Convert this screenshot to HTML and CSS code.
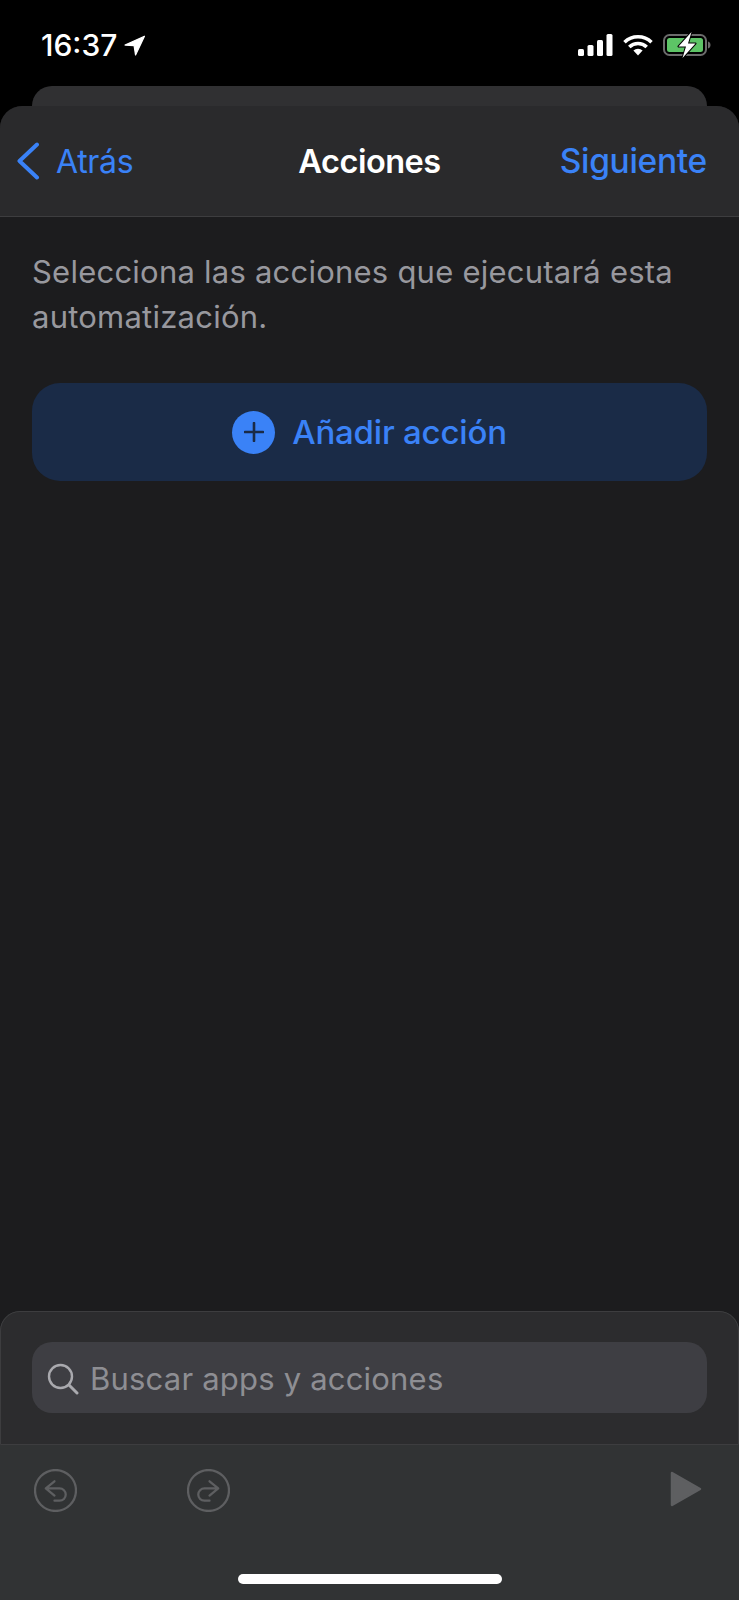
FILE: index.html
```html
<!doctype html>
<html lang="es">
  <head>
    <meta charset="UTF-8" />
    <meta name="viewport" content="width=device-width, initial-scale=1.0" />
    <title>Acciones</title>
    <link rel="stylesheet" href="styles.css">
  </head>
  <body>
    <div class="status-bar">
      <div class="status-left">
        <span class="time">16:37</span>
        <svg class="location" width="21" height="21" viewBox="0 0 20 20"><path d="M19.5 1.2 1 9.600l8.600.4 1.400 9z" fill="#fff" stroke="#fff" stroke-width="1.2" stroke-linejoin="round"/></svg>
      </div>
      <div class="status-right">
        <svg width="35" height="22" viewBox="0 0 35 22">
          <rect x="0" y="15" width="6" height="7" rx="1.5" fill="#fff"/>
          <rect x="9.5" y="11" width="6" height="11" rx="1.5" fill="#fff"/>
          <rect x="19" y="6" width="6" height="16" rx="1.5" fill="#fff"/>
          <rect x="28.5" y="0" width="6" height="22" rx="1.5" fill="#fff"/>
        </svg>
        <svg width="30" height="22" viewBox="0 0 30 22">
          <path d="M1.500 8.200a19.500 19.500 0 0 1 27 0M6.300 13a12.500 12.500 0 0 1 17.400 0" fill="none" stroke="#fff" stroke-width="3.600"/>
          <path d="M10.400 16.600a6.600 6.600 0 0 1 9.200 0L15 21.600z" fill="#fff"/>
        </svg>
        <svg class="battery" width="48" height="26" viewBox="0 0 48 26">
          <rect x="1" y="3" width="42" height="20" rx="5.5" fill="none" stroke="#6b6b6b" stroke-width="2"/>
          <rect x="4" y="6" width="36" height="14" rx="2.5" fill="#5dc466"/>
          <path d="M45 9.500c1.600.4 2.500 1.800 2.500 3.500s-.9 3.100-2.500 3.500z" fill="#6b6b6b"/>
          <path d="M28.500 0 15.500 14.500h7.500L19.500 26l13-14.500H25z" fill="#fff" stroke="#000" stroke-width="2" stroke-linejoin="round" paint-order="stroke"/>
        </svg>
      </div>
    </div>

    <div class="back-card"></div>

    <main class="sheet">
      <header class="nav">
        <a class="nav-back">
          <svg width="24" height="38" viewBox="0 0 24 38"><path d="M21 2.500 3.500 19 21 35.500" fill="none" stroke="#3a82f7" stroke-width="4" stroke-linecap="round" stroke-linejoin="round"/></svg>
          <span>Atrás</span>
        </a>
        <h1>Acciones</h1>
        <a class="nav-next">Siguiente</a>
      </header>

      <section class="content">
        <p class="intro">Selecciona las acciones que ejecutará esta automatización.</p>
        <button class="add-action" type="button">
          <span class="plus">
            <svg width="20" height="20" viewBox="0 0 20 20"><path d="M10 1v18M1 10h18" stroke="#1a2b47" stroke-width="2.600" stroke-linecap="round"/></svg>
          </span>
          <span>Añadir acción</span>
        </button>
      </section>

      <footer class="panel">
        <div class="search-wrap">
          <div class="search">
            <svg width="32" height="32" viewBox="0 0 32 32"><circle cx="13.500" cy="13.500" r="11.500" fill="none" stroke="#a9a9ae" stroke-width="2.400"/><path d="M22 22l8 8" stroke="#a9a9ae" stroke-width="3" stroke-linecap="round"/></svg>
            <span>Buscar apps y acciones</span>
          </div>
        </div>
        <div class="toolbar">
          <div class="history">
            <svg width="43" height="43" viewBox="0 0 42 42" fill="none" stroke="#5e5f61" stroke-width="2.200" stroke-linecap="round" stroke-linejoin="round"><circle cx="21" cy="21" r="20"/><path d="M20 12l-8.500 7 8.500 7M12 19h13a6 6 0 0 1 0 12h-5"/></svg>
            <svg width="43" height="43" viewBox="0 0 42 42" fill="none" stroke="#5e5f61" stroke-width="2.200" stroke-linecap="round" stroke-linejoin="round"><circle cx="21" cy="21" r="20"/><path d="M22 12l8.500 7-8.500 7M30 19H17a6 6 0 0 0 0 12h5"/></svg>
          </div>
          <svg class="play" width="32" height="36" viewBox="0 0 32 36"><path d="M2 2l28 16L2 34z" fill="#5e5f61" stroke="#5e5f61" stroke-width="2.500" stroke-linejoin="round"/></svg>
        </div>
        <div class="home-bar"></div>
      </footer>
    </main>
  </body>
</html>
```

FILE: styles.css
```css
/* Reset default browser styles */
body,
h1,
p,
button {
  margin: 0;
  padding: 0;
  box-sizing: border-box;
}

body {
  font-family: Inter, "Liberation Sans", sans-serif;
  background-color: #000;
  color: #fff;
  width: 739px;
  height: 1600px;
  overflow: hidden;
  display: flex;
  flex-direction: column;
}

/* Status bar */
.status-bar {
  height: 86px;
  flex-shrink: 0;
  padding: 32px 28px 0 41px;
  box-sizing: border-box;
  display: flex;
  justify-content: space-between;
  align-items: flex-start;
}

.status-left {
  display: flex;
  align-items: center;
  gap: 7px;
  height: 26px;
}

.time {
  font-size: 30px;
  font-weight: 500;
  letter-spacing: 0;
}

.status-right {
  display: flex;
  align-items: center;
  gap: 10px;
  height: 26px;
}

/* Card peeking out behind the sheet */
.back-card {
  height: 20px;
  flex-shrink: 0;
  margin: 0 32px;
  background-color: #303032;
  border-radius: 20px 20px 0 0;
}

.sheet {
  flex: 1;
  display: flex;
  flex-direction: column;
  background-color: #1c1c1e;
  border-radius: 22px 22px 0 0;
  overflow: hidden;
}

.nav {
  height: 111px;
  flex-shrink: 0;
  box-sizing: border-box;
  padding: 0 32px 0 16px;
  display: flex;
  justify-content: space-between;
  align-items: center;
  background-color: #2a2a2c;
  border-bottom: 1px solid #3d3d3f;
  position: relative;
}

.nav h1 {
  position: absolute;
  left: 0;
  right: 0;
  text-align: center;
  font-size: 32.5px;
  font-weight: 600;
  letter-spacing: -0.5px;
}

.nav-back {
  display: flex;
  align-items: center;
  gap: 16px;
  color: #3a82f7;
  font-size: 32px;
  letter-spacing: -0.3px;
}

.nav-next {
  color: #3a82f7;
  font-size: 33.5px;
  font-weight: 500;
  letter-spacing: -0.3px;
}

.content {
  flex: 1;
  padding: 32px 32px 0;
}

.intro {
  font-size: 31px;
  line-height: 45px;
  color: #98989e;
  letter-spacing: 0.23px;
}

.add-action {
  margin-top: 44px;
  width: 675px;
  height: 98px;
  border: none;
  border-radius: 28px;
  background-color: #1a2b47;
  color: #3a82f7;
  font-family: inherit;
  font-size: 33px;
  font-weight: 500;
  letter-spacing: -0.2px;
  display: flex;
  justify-content: center;
  align-items: center;
  gap: 17px;
}

.plus {
  width: 43px;
  height: 43px;
  border-radius: 50%;
  background-color: #3a82f7;
  display: flex;
  justify-content: center;
  align-items: center;
}

/* Bottom panel */
.panel {
  flex-shrink: 0;
  height: 289px;
  display: flex;
  flex-direction: column;
  background-color: #313334;
  border-radius: 20px 20px 0 0;
  position: relative;
}

.search-wrap {
  height: 134px;
  flex-shrink: 0;
  box-sizing: border-box;
  padding: 30px 31px 0;
  background-color: #2c2c2e;
  border: 1px solid #3d3d3f;
  border-radius: 20px 20px 0 0;
}

.search {
  height: 71px;
  box-sizing: border-box;
  padding: 2px 0 0 15px;
  display: flex;
  align-items: center;
  gap: 11px;
  background-color: #3e3e43;
  border-radius: 20px;
  color: #8e8e93;
  font-size: 31px;
  letter-spacing: 0.2px;
}

.toolbar {
  padding: 24px 37px 0 34px;
  display: flex;
  justify-content: space-between;
  align-items: center;
}

.history {
  display: flex;
  gap: 110px;
}

.play {
  margin-top: -4px;
}

.home-bar {
  position: absolute;
  left: 238px;
  bottom: 16px;
  width: 264px;
  height: 10px;
  border-radius: 5px;
  background-color: #fff;
}
```
